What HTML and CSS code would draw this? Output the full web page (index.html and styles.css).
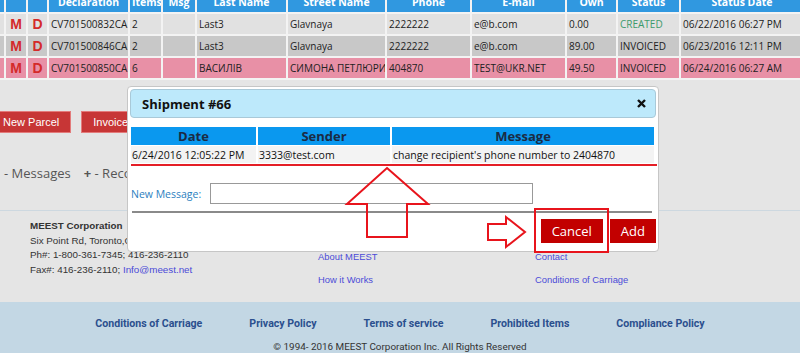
FILE: index.html
```html
<!DOCTYPE html>
<html lang="en">
<head>
    <meta charset="UTF-8">
    <meta name="viewport" content="width=device-width, initial-scale=1.0">
    <title>MEEST - Parcels</title>
    <link rel="stylesheet" href="styles.css">
</head>
<body>
    <div class="page">
        <table class="parcels">
            <colgroup>
                <col style="width: 22px">
                <col style="width: 20px">
                <col style="width: 19px">
                <col style="width: 79px">
                <col style="width: 31px">
                <col style="width: 32px">
                <col style="width: 89px">
                <col style="width: 97px">
                <col style="width: 83px">
                <col style="width: 93px">
                <col style="width: 49px">
                <col style="width: 61px">
                <col style="width: 122px">
            </colgroup>
            <thead>
                <tr>
                    <th></th>
                    <th></th>
                    <th></th>
                    <th>Declaration</th>
                    <th>Items</th>
                    <th>Msg</th>
                    <th>Last Name</th>
                    <th>Street Name</th>
                    <th>Phone</th>
                    <th>E-mail</th>
                    <th>Own</th>
                    <th>Status</th>
                    <th>Status Date</th>
                </tr>
            </thead>
            <tbody>
                <tr class="row-light">
                    <td></td>
                    <td class="act">M</td>
                    <td class="act">D</td>
                    <td>CV701500832CA</td>
                    <td>2</td>
                    <td></td>
                    <td>Last3</td>
                    <td>Glavnaya</td>
                    <td>2222222</td>
                    <td>e@b.com</td>
                    <td>0.00</td>
                    <td class="created">CREATED</td>
                    <td>06/22/2016 06:27 PM</td>
                </tr>
                <tr class="row-dark">
                    <td></td>
                    <td class="act">M</td>
                    <td class="act">D</td>
                    <td>CV701500846CA</td>
                    <td>2</td>
                    <td></td>
                    <td>Last3</td>
                    <td>Glavnaya</td>
                    <td>2222222</td>
                    <td>e@b.com</td>
                    <td>89.00</td>
                    <td>INVOICED</td>
                    <td>06/23/2016 12:11 PM</td>
                </tr>
                <tr class="row-marked">
                    <td></td>
                    <td class="act">M</td>
                    <td class="act">D</td>
                    <td>CV701500850CA</td>
                    <td>6</td>
                    <td></td>
                    <td>ВАСИЛІВ</td>
                    <td>СИМОНА ПЕТЛЮРИ</td>
                    <td>404870</td>
                    <td>TEST@UKR.NET</td>
                    <td>49.50</td>
                    <td>INVOICED</td>
                    <td>06/24/2016 06:27 AM</td>
                </tr>
            </tbody>
        </table>

        <div class="actions">
            <button class="btn-red">New Parcel</button>
            <button class="btn-red">Invoice</button>
        </div>

        <div class="legend">
            <span>- Messages</span>
            <span><b>+</b> - Records</span>
        </div>

        <footer class="site-footer">
            <div class="contacts">
                <strong>MEEST Corporation</strong><br>
                Six Point Rd, Toronto,ON<br>
                Ph#: 1-800-361-7345; 416-236-2110<br>
                Fax#: 416-236-2110; <a href="#">Info@meest.net</a>
            </div>
            <ul class="links">
                <li><a href="#">About MEEST</a></li>
                <li><a href="#">How it Works</a></li>
            </ul>
            <ul class="links">
                <li><a href="#">Contact</a></li>
                <li><a href="#">Conditions of Carriage</a></li>
            </ul>
        </footer>

        <div class="bottom-bar">
            <nav class="policy-links">
                <a href="#">Conditions of Carriage</a>
                <a href="#">Privacy Policy</a>
                <a href="#">Terms of service</a>
                <a href="#">Prohibited Items</a>
                <a href="#">Compliance Policy</a>
            </nav>
            <p class="copyright">&copy; 1994- 2016 MEEST Corporation Inc. All Rights Reserved</p>
        </div>
    </div>

    <div class="modal">
        <div class="modal-title">
            <span>Shipment #66</span>
            <svg class="close" width="9" height="9" viewBox="0 0 9 9">
                <path d="M1 1 L8 8 M8 1 L1 8" stroke="#111" stroke-width="2.4" fill="none"/>
            </svg>
        </div>
        <table class="messages">
            <colgroup>
                <col style="width: 125px">
                <col style="width: 132px">
                <col style="width: 262px">
            </colgroup>
            <thead>
                <tr>
                    <th>Date</th>
                    <th>Sender</th>
                    <th>Message</th>
                </tr>
            </thead>
            <tbody>
                <tr>
                    <td>6/24/2016 12:05:22 PM</td>
                    <td>3333@test.com</td>
                    <td>change recipient's phone number to 2404870</td>
                </tr>
            </tbody>
        </table>
        <div class="red-rule"></div>
        <div class="new-message">
            <label for="newMessage">New Message:</label>
            <input type="text" id="newMessage">
        </div>
        <div class="gray-rule"></div>
        <div class="modal-buttons">
            <button class="btn-dark">Cancel</button>
            <button class="btn-dark">Add</button>
        </div>
    </div>

    <!-- annotation marks drawn over the screen -->
    <svg class="marks" width="800" height="353" viewBox="0 0 800 353">
        <polygon points="387,168 428,204 407,204 407,237 367,237 367,204 347,204" fill="none" stroke="#e8141c" stroke-width="2"/>
        <polygon points="488,224 506,224 506,217 525,232 506,247 506,240 488,240" fill="none" stroke="#e8141c" stroke-width="2"/>
        <rect x="535" y="209" width="73" height="43" fill="none" stroke="#e8141c" stroke-width="2"/>
    </svg>
</body>
</html>
```

FILE: styles.css
```css
body {
    margin: 0;
    width: 800px;
    height: 353px;
    overflow: hidden;
    background-color: #e5e5e5;
    font-family: "Open Sans", Arial, sans-serif;
    position: relative;
}
.page {
    width: 800px;
}
.parcels {
    table-layout: fixed;
    width: 825px;
    margin: -10px 0 0 -20px;
    border-collapse: separate;
    border-spacing: 2px;
    background-color: #f3f3f3;
    font-size: 10px;
    color: #222;
}
.parcels th, .parcels td {
    height: 20px;
    padding: 0 2px;
    white-space: nowrap;
    overflow: hidden;
    box-sizing: border-box;
}
.parcels th {
    background-color: #3098e0;
    color: #fff;
    font-size: 10.5px;
    font-weight: bold;
    text-align: center;
}
.row-light td {
    background-color: #e1e1e1;
}
.row-dark td {
    background-color: #c8c8c8;
}
.row-marked td {
    background-color: #e890a6;
}
.parcels td.act {
    text-align: center;
    font-family: "Liberation Sans", Arial, sans-serif;
    font-size: 14px;
    font-weight: bold;
    color: #d42a2a;
}
.parcels td.created {
    color: #3d9a6c;
}
.actions {
    display: flex;
    gap: 10px;
    margin: 31px 0 0 -9px;
}
.btn-red {
    height: 22px;
    padding: 0 11px;
    background-color: #c73636;
    color: #fff;
    border: 1px solid #e37b7b;
    font-family: "Liberation Sans", Arial, sans-serif;
    font-size: 11px;
}
.legend {
    display: flex;
    gap: 13px;
    margin: 31px 0 0 4px;
    line-height: 18px;
    font-size: 13px;
    color: #555;
}
.site-footer {
    display: grid;
    grid-template-columns: 288px 217px 1fr;
    height: 83px;
    margin-top: 28px;
    padding: 8px 0 0 30px;
    border-top: 1px solid #cdd8e0;
    font-family: "Liberation Sans", Arial, sans-serif;
    font-size: 9.8px;
    color: #333;
}
.contacts {
    line-height: 14.7px;
}
.site-footer a {
    color: #4b4bd8;
    text-decoration: none;
}
.links {
    list-style: none;
    margin: 0;
    padding: 26px 0 0;
    line-height: 23px;
    font-size: 9.4px;
}
.bottom-bar {
    height: 60px;
    background-color: #c3d7e4;
    text-align: center;
    font-family: Roboto, "DejaVu Sans Condensed", sans-serif;
}
.policy-links {
    display: flex;
    justify-content: center;
    gap: 47px;
    padding: 14px 0 0;
    line-height: 16px;
    font-size: 10.6px;
}
.policy-links a {
    color: #2b4f8e;
    font-weight: bold;
    text-decoration: none;
}
.copyright {
    margin: 7px 0 0;
    line-height: 16px;
    font-size: 9.9px;
    color: #333;
}

/* shipment messages dialog */
.modal {
    position: absolute;
    left: 127px;
    top: 86px;
    width: 532px;
    height: 166px;
    box-sizing: border-box;
    padding: 2px;
    background-color: #fff;
    border: 1px solid #c6c6c6;
    border-radius: 4px;
}
.modal-title {
    display: flex;
    justify-content: space-between;
    align-items: center;
    height: 29px;
    box-sizing: border-box;
    padding: 0 9px 0 11px;
    background-color: #bde9fb;
    border: 1px solid #a9c9d8;
    border-radius: 4px;
    font-size: 13px;
    font-weight: bold;
    color: #111;
}
.messages {
    table-layout: fixed;
    width: 527px;
    margin: 8px 0 0 -1px;
    border-collapse: separate;
    border-spacing: 2px 1px;
    font-size: 10.5px;
}
.messages th {
    height: 18px;
    padding: 0;
    background-color: #0a98ef;
    color: #1b2b44;
    font-size: 13px;
    line-height: 18px;
}
.messages td {
    height: 17px;
    padding: 0 1px;
    background-color: #f3f3f3;
    color: #111;
    white-space: nowrap;
}
.red-rule {
    height: 2px;
    margin: 0 -1px 0 1px;
    background-color: #e41e26;
}
.new-message {
    display: flex;
    align-items: center;
    margin-top: 17px;
    padding-left: 1px;
}
.new-message label {
    width: 79px;
    font-size: 10.5px;
    color: #2d7fc0;
}
.new-message input {
    width: 323px;
    height: 21px;
    box-sizing: border-box;
    border: 1px solid #999;
    margin: 0;
}
.gray-rule {
    height: 2px;
    margin: 7px 4px 0 2px;
    background-color: #8a8a8a;
}
.modal-buttons {
    display: flex;
    justify-content: flex-end;
    gap: 7px;
    margin-top: 6px;
}
.btn-dark {
    height: 24px;
    padding: 0 11px;
    background-color: #c20000;
    color: #fff;
    border: none;
    font-family: "Open Sans", Arial, sans-serif;
    font-size: 13px;
}
.marks {
    position: absolute;
    left: 0;
    top: 0;
    pointer-events: none;
}
```
